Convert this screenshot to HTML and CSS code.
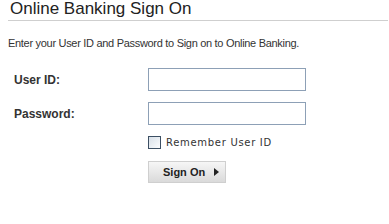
FILE: index.html
```html
<!DOCTYPE html>
<html lang="en">
<head>
    <meta charset="UTF-8">
    <title>Online Banking Sign On</title>
    <link rel="stylesheet" href="styles.css">
</head>
<body>
    <h1 class="title">Online Banking Sign On</h1>

    <p class="intro">Enter your User ID and Password to Sign on to Online Banking.</p>

    <form class="signon" onsubmit="return false;">
        <div class="form-row">
            <label for="user-id">User ID:</label>
            <input type="text" id="user-id">
        </div>
        <div class="form-row">
            <label for="password">Password:</label>
            <input type="password" id="password">
        </div>
        <div class="form-row">
            <span></span>
            <label class="remember"><input type="checkbox"> Remember User ID</label>
        </div>
        <div class="form-row">
            <span></span>
            <button type="submit" class="signon-btn">Sign On <span class="arrow"></span></button>
        </div>
    </form>
</body>
</html>
```
FILE: styles.css
```css
body {
    margin: 0;
    background: #fff;
    font-family: Arial, "Liberation Sans", sans-serif;
    color: #333;
}

.title {
    margin: 0 1px 0 8px;
    padding: 0 0 2px 2px;
    font-size: 17px;
    line-height: 18px;
    font-weight: normal;
    color: #222;
    border-bottom: 1px solid #cfcfcf;
}

.intro {
    margin: 15px 0 0 8px;
    font-size: 11px;
    line-height: 14px;
    letter-spacing: -0.3px;
}

.signon {
    margin-top: 18px;
}

.form-row {
    display: grid;
    grid-template-columns: 134px auto;
    align-items: center;
    margin-left: 14px;
    margin-bottom: 11px;
}

.form-row label {
    font-size: 12px;
    font-weight: bold;
}

input[type="text"],
input[type="password"] {
    width: 158px;
    height: 23px;
    box-sizing: border-box;
    margin: 0;
    border: 1px solid #8da0b6;
    padding: 2px 4px;
}

.form-row .remember {
    display: flex;
    align-items: center;
    gap: 5px;
    font-family: "DejaVu Sans", Verdana, sans-serif;
    font-size: 10px;
    font-weight: normal;
    letter-spacing: 0.7px;
    color: #333;
}

.remember input {
    -webkit-appearance: none;
    appearance: none;
    width: 13px;
    height: 13px;
    margin: 0;
    border: 1px solid #3c4f63;
    background: linear-gradient(135deg, #d8e0e8, #fbfcfd);
}

.signon-btn {
    width: 78px;
    height: 22px;
    margin-top: 1px;
    padding: 0 0 0 14px;
    display: flex;
    align-items: center;
    white-space: nowrap;
    border: 1px solid #cfcfcf;
    background: linear-gradient(#f6f6f6, #dadada);
    font-family: Arial, "Liberation Sans", sans-serif;
    font-size: 11px;
    font-weight: bold;
    color: #222;
    cursor: pointer;
}

.arrow {
    width: 0;
    height: 0;
    margin-left: 9px;
    border-top: 4px solid transparent;
    border-bottom: 4px solid transparent;
    border-left: 5px solid #222;
}
```
